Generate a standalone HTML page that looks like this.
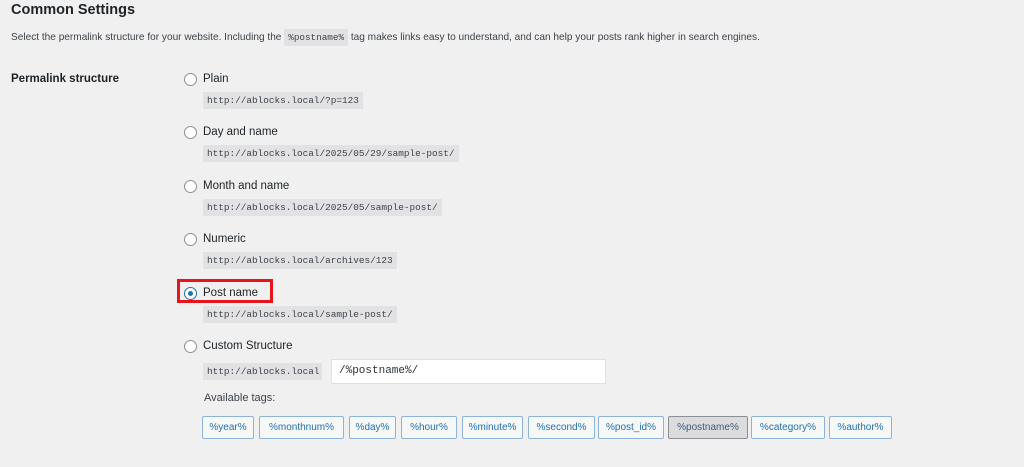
<!DOCTYPE html>
<html><head><meta charset="utf-8"><style>
*{box-sizing:border-box;margin:0;padding:0}
body{width:1024px;height:467px;background:#f0f0f1;font-family:"Liberation Sans",sans-serif;color:#1d2327;position:relative;overflow:hidden}
.a{position:absolute;white-space:nowrap}
h2{position:absolute;left:11px;top:2px;font-size:14.5px;font-weight:600}
.desc{left:11px;top:32px;font-size:10.1px;color:#3c434a}
code{font-family:"Liberation Mono",monospace;font-size:9.3px;background:#e2e2e4;padding:3px 4px;color:#3c434a}
.lbl{font-size:11.5px;font-weight:600}
.r{position:absolute;width:13px;height:13px;border:1px solid #8c8f94;border-radius:50%;background:#fff;left:184px}
.t{font-size:11.5px;left:203px}
.c{position:absolute;left:203px;height:17px;line-height:17px;font-family:"Liberation Mono",monospace;font-size:9.4px;background:#e2e2e4;padding:0 4px;color:#3c434a}
.tag{position:absolute;top:416px;height:23px;border:1px solid #8fb3d6;border-radius:2px;background:#f6f7f7;color:#2271b1;font-size:10px;line-height:21px;text-align:center}
</style></head><body>
<h2>Common Settings</h2>
<div class="a desc">Select the permalink structure for your website. Including the <code>%postname%</code> tag makes links easy to understand, and can help your posts rank higher in search engines.</div>
<div class="a lbl" style="left:11px;top:73px">Permalink structure</div>

<div class="r" style="top:73px"></div><div class="a t" style="top:73px">Plain</div><div class="c" style="top:92px">http://ablocks.local/?p=123</div>
<div class="r" style="top:126px"></div><div class="a t" style="top:126px">Day and name</div><div class="c" style="top:145px">http://ablocks.local/2025/05/29/sample-post/</div>
<div class="r" style="top:180px"></div><div class="a t" style="top:180px">Month and name</div><div class="c" style="top:199px">http://ablocks.local/2025/05/sample-post/</div>
<div class="r" style="top:233px"></div><div class="a t" style="top:233px">Numeric</div><div class="c" style="top:252px">http://ablocks.local/archives/123</div>
<div class="r" style="top:287px;border-color:#2271b1"><div style="position:absolute;left:3px;top:3px;width:5px;height:5px;border-radius:50%;background:#2271b1"></div></div><div class="a t" style="top:287px">Post name</div>
<div class="a" style="left:177px;top:279px;width:96px;height:24px;border:3px solid #e8141b"></div>
<div class="c" style="top:306px">http://ablocks.local/sample-post/</div>
<div class="r" style="top:340px"></div><div class="a t" style="top:340px">Custom Structure</div>
<div class="c" style="top:363px;width:119px">http://ablocks.local</div>
<div class="a" style="left:331px;top:359px;width:275px;height:25px;background:#fff;border:1px solid #e0e0e0;font-family:'Liberation Mono',monospace;font-size:11px;line-height:23px;padding-left:7px;color:#2c3338">/%postname%/</div>
<div class="a" style="left:204px;top:392px;font-size:11px;color:#3c434a">Available tags:</div>
<div class="tag" style="left:202px;width:52px">%year%</div>
<div class="tag" style="left:259px;width:85px">%monthnum%</div>
<div class="tag" style="left:349px;width:47px">%day%</div>
<div class="tag" style="left:401px;width:56px">%hour%</div>
<div class="tag" style="left:462px;width:61px">%minute%</div>
<div class="tag" style="left:528px;width:67px">%second%</div>
<div class="tag" style="left:598px;width:66px">%post_id%</div>
<div class="tag" style="left:668px;width:80px;background:#dcdcde;border-color:#8c8f94;color:#3c5a7a">%postname%</div>
<div class="tag" style="left:751px;width:74px">%category%</div>
<div class="tag" style="left:829px;width:63px">%author%</div>
</body></html>
